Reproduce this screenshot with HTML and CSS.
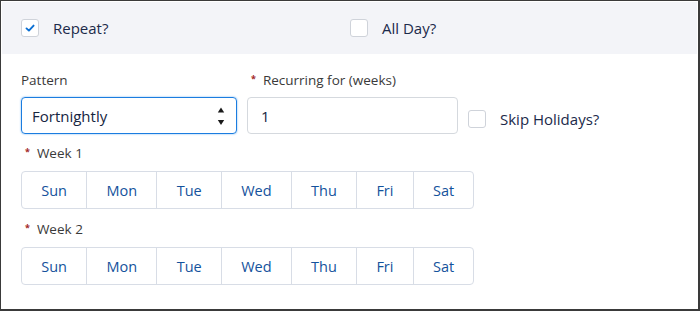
FILE: index.html
```html
<!DOCTYPE html>
<html lang="en">
<head>
<meta charset="utf-8">
<title>Repeat</title>
<link rel="stylesheet" href="styles.css">
</head>
<body>
<div class="frame">
  <div class="band">
    <label class="check-item">
      <span class="box checked">
        <svg viewBox="0 0 10 10" width="10" height="10"><path d="M1.5 5.4 L3.9 7.6 L8.6 2.6" fill="none" stroke="#0a6fd3" stroke-width="1.9" stroke-linecap="round" stroke-linejoin="round"/></svg>
      </span>
      <span class="check-text">Repeat?</span>
    </label>
    <label class="check-item">
      <span class="box"></span>
      <span class="check-text">All Day?</span>
    </label>
  </div>
  <div class="content">
    <div class="row">
      <div class="field pattern">
        <div class="label">Pattern</div>
        <div class="select">
          <span class="select-text">Fortnightly</span>
          <span class="arrows">
            <svg viewBox="0 0 8 20" width="8" height="20"><path d="M0.8 6.5 L4 1.5 L7.2 6.5 Z" fill="#1a1a1a"/><path d="M0.8 14 L4 19 L7.2 14 Z" fill="#1a1a1a"/></svg>
          </span>
        </div>
      </div>
      <div class="field recur">
        <div class="label"><span class="req">*</span>Recurring for (weeks)</div>
        <div class="input"><span class="input-text">1</span></div>
      </div>
      <label class="check-item skip">
        <span class="box"></span>
        <span class="check-text">Skip Holidays?</span>
      </label>
    </div>
    <div class="week">
      <div class="label wk"><span class="req">*</span>Week 1</div>
      <div class="btn-group">
        <span class="day">Sun</span><span class="day">Mon</span><span class="day">Tue</span><span class="day">Wed</span><span class="day">Thu</span><span class="day">Fri</span><span class="day">Sat</span>
      </div>
    </div>
    <div class="week week2">
      <div class="label wk"><span class="req">*</span>Week 2</div>
      <div class="btn-group">
        <span class="day">Sun</span><span class="day">Mon</span><span class="day">Tue</span><span class="day">Wed</span><span class="day">Thu</span><span class="day">Fri</span><span class="day">Sat</span>
      </div>
    </div>
  </div>
</div>
</body>
</html>
```
FILE: styles.css
```css
* { box-sizing: border-box; }
html, body { margin: 0; padding: 0; background: #fff; }
body {
  font-family: "Open Sans", "Liberation Sans", sans-serif;
  font-weight: 500;
  color: #16325c;
}
.frame {
  width: 700px;
  height: 311px;
  border-style: solid;
  border-color: #3a3a3a;
  border-width: 1px 2px 2px 1px;
  padding: 1px 1px 0 1px;
  background: #fff;
}
.band {
  height: 52px;
  background: #f3f4f8;
  display: grid;
  grid-template-columns: 329px 1fr;
  align-items: center;
  padding-left: 19px;
}
.check-item {
  display: flex;
  align-items: center;
}
.box {
  width: 18px;
  height: 18px;
  border: 1px solid #cfd3da;
  border-radius: 3px;
  background: #fff;
  display: flex;
  align-items: center;
  justify-content: center;
  flex: none;
}
.check-text {
  margin-left: 14px;
  font-size: 15px;
  color: #1b2a4a;
}
.content {
  padding: 16px 0 0 19px;
}
.row {
  display: flex;
  align-items: flex-end;
}
.field { display: flex; flex-direction: column; }
.pattern { width: 216px; }
.recur { width: 211px; margin-left: 10px; }
.label {
  font-size: 13.5px;
  line-height: 20px;
  height: 20px;
  color: #3a3a3a;
  margin-bottom: 7px;
  white-space: nowrap;
}
.req {
  color: #a3282b;
  font-size: 9px;
  line-height: 0;
  margin-right: 7px;
  margin-left: 4px;
  position: relative;
  top: -3px;
  font-weight: 700;
}
.select, .input {
  height: 37px;
  border-radius: 4px;
  display: flex;
  align-items: center;
  font-size: 15px;
  color: #16253f;
}
.select {
  border: 1px solid #1b7de0;
  box-shadow: 0 0 2px #6aaef0;
  padding: 0 10px 0 10px;
  justify-content: space-between;
}
.arrows { display: flex; align-items: center; margin-right: 1px; }
.input {
  border: 1px solid #d5d9de;
  padding-left: 13px;
}
.skip {
  margin-left: 10px;
  height: 37px;
  position: relative;
  top: 3px;
}
.skip .check-text { margin-left: 14px; }
.week { margin-top: 9px; }
.week2 { margin-top: 10px; }
.label.wk { margin-bottom: 8px; }
.btn-group {
  display: inline-flex;
  height: 38px;
  border: 1px solid #d8dde6;
  border-radius: 4px;
  background: #fff;
}
.day {
  display: flex;
  align-items: center;
  justify-content: center;
  padding: 0 19.25px;
  font-size: 14.5px;
  color: #14529c;
  border-left: 1px solid #d8dde6;
}
.day:first-child { border-left: none; }
```
